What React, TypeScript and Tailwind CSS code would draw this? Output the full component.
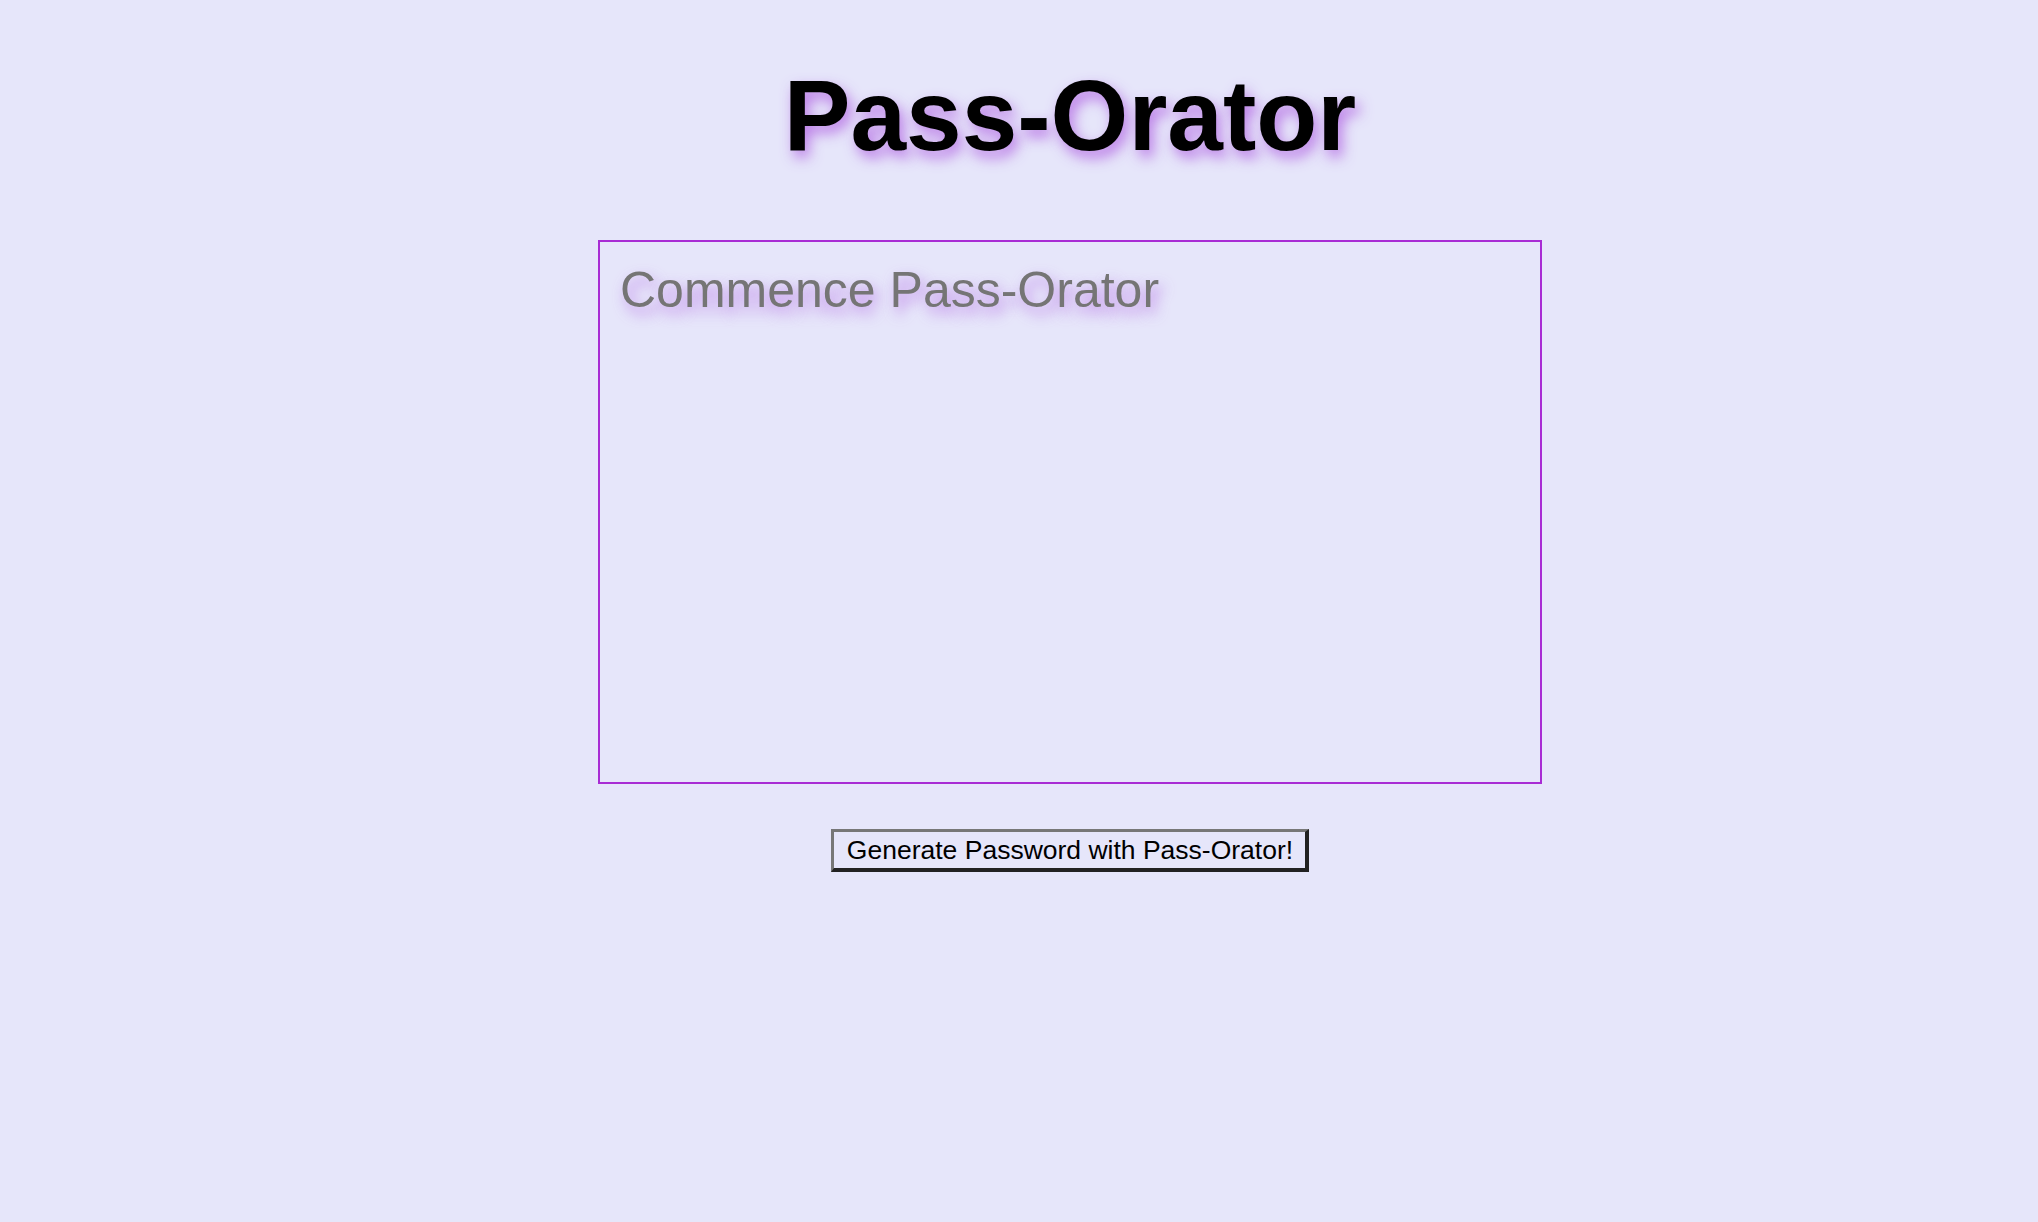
import React from "react";

export default function App() {
  return (
    <div
      className="min-h-screen w-full bg-[#e6e6fa]"
      style={{ fontFamily: '"Liberation Sans", Arial, sans-serif' }}
    >
      <div className="flex flex-col items-center pl-[102px]">
        <h1 className="mt-[58px] text-[100px] font-bold leading-[115px] text-black [text-shadow:4px_7px_14px_rgba(175,95,225,0.8)]">
          Pass-Orator
        </h1>
        <textarea
          className="mt-[67px] h-[544px] w-[944px] resize-none border-2 border-[#a82cd4] bg-transparent pl-[20px] pt-[20px] text-[50px] leading-[57.5px] text-[#757575] outline-none placeholder:text-[#757575] placeholder:[text-shadow:4px_7px_14px_rgba(175,95,225,0.75)]"
          placeholder="Commence Pass-Orator"
          readOnly
        />
        <button className="mt-[45px] flex h-[43px] items-center border-t-[3px] border-l-[3px] border-b-[4px] border-r-[4px] border-t-[#777777] border-l-[#777777] border-b-[#222222] border-r-[#222222] bg-[#e6e6fa] pl-[13px] pr-[12px] text-[26.5px] leading-[30px] text-black">
          Generate Password with Pass-Orator!
        </button>
      </div>
    </div>
  );
}
